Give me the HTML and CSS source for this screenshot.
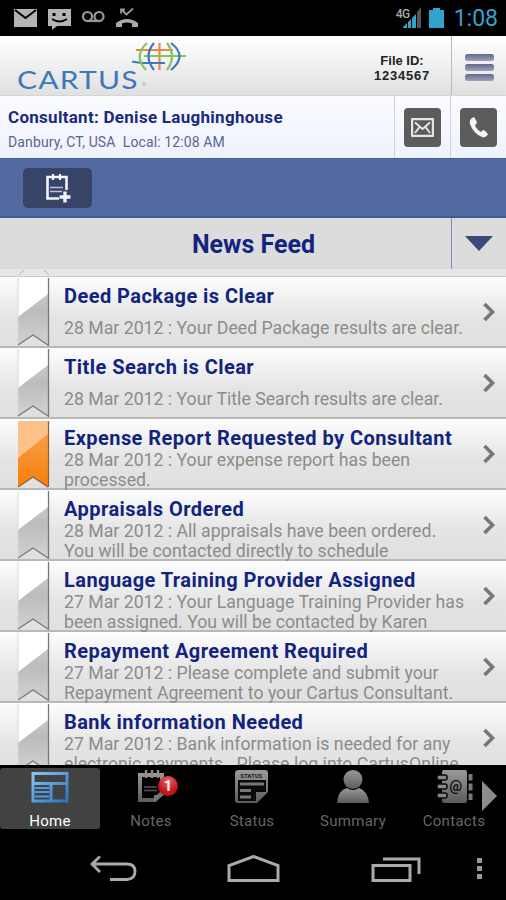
FILE: index.html
```html
<!DOCTYPE html>
<html lang="en">
<head>
    <meta charset="UTF-8">
    <meta name="viewport" content="width=device-width, initial-scale=1.0">
    <title>Cartus Mobile</title>
    <link rel="stylesheet" href="styles.css">
</head>
<body>
    <!-- shared shapes -->
    <svg class="defs" width="0" height="0">
        <defs>
            <linearGradient id="silver" x1="0" y1="0" x2="0" y2="1">
                <stop offset="0" stop-color="#d2d2d2"/>
                <stop offset="0.5" stop-color="#bcbcbc"/>
                <stop offset="1" stop-color="#d2d2d2"/>
            </linearGradient>
            <linearGradient id="orange" x1="0" y1="0" x2="0" y2="1">
                <stop offset="0" stop-color="#f9a552"/>
                <stop offset="1" stop-color="#f77f0c"/>
            </linearGradient>
            <linearGradient id="grey" x1="0" y1="0" x2="0" y2="1">
                <stop offset="0" stop-color="#999"/>
                <stop offset="1" stop-color="#5c5c5c"/>
            </linearGradient>
            <linearGradient id="blue" x1="0" y1="0" x2="1" y2="1">
                <stop offset="0" stop-color="#86c4f4"/>
                <stop offset="1" stop-color="#2a74c4"/>
            </linearGradient>
            <linearGradient id="bars" x1="0" y1="0" x2="0" y2="1">
                <stop offset="0" stop-color="#626b85"/>
                <stop offset="1" stop-color="#99a2bf"/>
            </linearGradient>
        </defs>
        <symbol id="ribbon" viewBox="0 0 33 70">
            <path d="M1 1H31V68L16 58L1 68Z" fill="url(#silver)"/>
            <path d="M1 1H31V17L1 40Z" fill="#fff"/>
            <path d="M1 1V67" stroke="#d8d8d8" fill="none"/>
            <path d="M31.5 1V69M1 68L16 58L31 68" stroke="#777" stroke-width="1.3" fill="none"/>
        </symbol>
        <symbol id="ribbon-on" viewBox="0 0 33 70">
            <path d="M1 2H31V68L16 58L1 68Z" fill="url(#orange)"/>
            <path d="M1 2H31V15L1 39Z" fill="#fcc089"/>
            <path d="M31.5 2V68M1 68L16 58L31 68" stroke="#876040" stroke-width="1.2" fill="none"/>
        </symbol>
        <symbol id="chevron" viewBox="0 0 14 20">
            <path d="M2.500 2L10.500 10L2.500 18" fill="none" stroke="#777" stroke-width="3.600"/>
        </symbol>
    </svg>

    <div class="statusbar">
        <svg width="130" height="22" viewBox="0 0 130 22">
            <path d="M0 2H23V20H0Z" fill="#b4b4b4"/>
            <path d="M1 3L11.500 11L22 3" fill="none" stroke="#000" stroke-width="2"/>
            <path d="M34 2H57V19H43L38 23V19H34Z" fill="#b4b4b4"/>
            <path d="M40 6V9M50 6V9" stroke="#000" stroke-width="3"/>
            <path d="M38 12Q45.500 17 53 12" fill="none" stroke="#000" stroke-width="1.800"/>
            <g fill="none" stroke="#999" stroke-width="2.200">
                <circle cx="73.500" cy="9.500" r="4.500"/>
                <circle cx="85" cy="9.500" r="4.500"/>
                <path d="M73 14H86"/>
            </g>
            <path d="M102 20V16Q113 8 124 16V20H118V16.500Q113 14.500 108 16.500V20Z" fill="#aaa"/>
            <path d="M108 3L112.500 7.500L119 1.500M107 6.500V2.500H111" fill="none" stroke="#999" stroke-width="1.800"/>
        </svg>
        <div class="status-right">
            <span class="net">4G</span>
            <svg width="42" height="22" viewBox="0 0 42 22">
                <path d="M1 21V20L5 16V21Z M6 21V15L9 12V21Z M10 21V11L14 7V21Z" fill="#33a3ce"/>
                <path d="M15 21V5L19 0V21Z" fill="#555"/>
                <path d="M27 3H31V1H38V3H42V21H27Z" fill="#33a3ce"/>
            </svg>
            <span class="clock">1:08</span>
        </div>
    </div>

    <div class="header">
        <div class="logo">
            <span class="brand">CARTUS</span><i class="dot"></i>
            <svg class="globe" width="58" height="32" viewBox="0 0 58 32">
                <g fill="none" stroke-width="2.200">
                    <path d="M5 9H42M28.500 2V29" stroke="#ee8746"/>
                    <path d="M13 15H55" stroke="#83c657"/>
                    <path d="M1 20.500L10 22H34" stroke="#3f79bd"/>
                    <path d="M16 2Q2 15 15 29M36 2Q46 15 36 29" stroke="#83c657"/>
                    <path d="M23 2Q12 15 23 29M40 2Q57 15 40 29" stroke="#3f79bd"/>
                </g>
            </svg>
        </div>
        <div class="file-id"><span>File ID:</span><span class="number">1234567</span></div>
        <div class="menu">
            <svg width="29" height="27" viewBox="0 0 29 27">
                <rect x="0" y="0" width="29" height="7" rx="2.500" fill="url(#bars)"/>
                <rect x="0" y="10" width="29" height="7" rx="2.500" fill="url(#bars)"/>
                <rect x="0" y="20" width="29" height="7" rx="2.500" fill="url(#bars)"/>
            </svg>
        </div>
    </div>

    <div class="consultant">
        <div class="who">
            <div class="name">Consultant: Denise Laughinghouse</div>
            <div class="place">Danbury, CT, USA&nbsp; Local: 12:08 AM</div>
        </div>
        <div class="contact">
            <div class="square">
                <svg width="23" height="19" viewBox="0 0 23 19">
                    <rect x="1" y="1" width="21" height="17" rx="1" fill="none" stroke="#e6e6e6" stroke-width="2.400"/>
                    <path d="M4 4.500L11.500 11L19 4.500M4 15L8.500 9M19 15L14.500 9" fill="none" stroke="#e6e6e6" stroke-width="2"/>
                </svg>
            </div>
        </div>
        <div class="contact">
            <div class="square">
                <svg width="20" height="21" viewBox="0 0 20 21">
                    <path d="M3 1Q0 3 1 7Q4 16 13 20Q17 21 19 17L15 13Q13 13 12 15Q7 12 6 8Q8 7 8 5L5 0Z" fill="#f4f4f4"/>
                </svg>
            </div>
        </div>
    </div>

    <div class="toolbar">
        <div class="add-note">
            <svg width="26" height="30" viewBox="0 0 26 30">
                <g fill="none" stroke="#f2f4f8" stroke-width="2.600">
                    <path d="M14 25.500H2.500V4H21.500V17"/>
                    <path d="M8 1V7M15 1V7" stroke-width="2.200"/>
                    <path d="M5 14.500H18M5 18.500H17" stroke-width="1.600" stroke="#bdc4d3"/>
                    <path d="M20 18.500V29.500M14.500 24H25.500" stroke-width="3.400"/>
                </g>
            </svg>
        </div>
    </div>

    <div class="feed-head">
        <h1>News Feed</h1>
        <div class="arrow">
            <svg width="28" height="15" viewBox="0 0 28 15"><path d="M0 0H28L14 15Z" fill="#3b4978"/></svg>
        </div>
    </div>

    <div class="list">
        <div class="peek">
            <svg width="33" height="8" viewBox="0 0 33 8"><path d="M1 6L6 1M31 6L26 1" stroke="#b5b5b5" fill="none"/></svg>
        </div>
        <div class="row">
            <svg class="ribbon" width="33" height="70"><use href="#ribbon"/></svg>
            <div class="text single">
                <h2>Deed Package is Clear</h2>
                <p>28 Mar 2012 : Your Deed Package results are clear.</p>
            </div>
            <svg class="chevron" width="14" height="20"><use href="#chevron"/></svg>
        </div>
        <div class="row">
            <svg class="ribbon" width="33" height="70"><use href="#ribbon"/></svg>
            <div class="text single">
                <h2>Title Search is Clear</h2>
                <p>28 Mar 2012 : Your Title Search results are clear.</p>
            </div>
            <svg class="chevron" width="14" height="20"><use href="#chevron"/></svg>
        </div>
        <div class="row">
            <svg class="ribbon" width="33" height="70"><use href="#ribbon-on"/></svg>
            <div class="text">
                <h2>Expense Report Requested by Consultant</h2>
                <p>28 Mar 2012 : Your expense report has been<br>processed.</p>
            </div>
            <svg class="chevron" width="14" height="20"><use href="#chevron"/></svg>
        </div>
        <div class="row">
            <svg class="ribbon" width="33" height="70"><use href="#ribbon"/></svg>
            <div class="text">
                <h2>Appraisals Ordered</h2>
                <p>28 Mar 2012 : All appraisals have been ordered.<br>You will be contacted directly to schedule</p>
            </div>
            <svg class="chevron" width="14" height="20"><use href="#chevron"/></svg>
        </div>
        <div class="row">
            <svg class="ribbon" width="33" height="70"><use href="#ribbon"/></svg>
            <div class="text">
                <h2>Language Training Provider Assigned</h2>
                <p>27 Mar 2012 : Your Language Training Provider has<br>been assigned. You will be contacted by Karen</p>
            </div>
            <svg class="chevron" width="14" height="20"><use href="#chevron"/></svg>
        </div>
        <div class="row">
            <svg class="ribbon" width="33" height="70"><use href="#ribbon"/></svg>
            <div class="text">
                <h2>Repayment Agreement Required</h2>
                <p>27 Mar 2012 : Please complete and submit your<br>Repayment Agreement to your Cartus Consultant.</p>
            </div>
            <svg class="chevron" width="14" height="20"><use href="#chevron"/></svg>
        </div>
        <div class="row">
            <svg class="ribbon" width="33" height="70"><use href="#ribbon"/></svg>
            <div class="text">
                <h2>Bank information Needed</h2>
                <p>27 Mar 2012 : Bank information is needed for any<br>electronic payments.&nbsp; Please log into CartusOnline</p>
            </div>
            <svg class="chevron" width="14" height="20"><use href="#chevron"/></svg>
        </div>
    </div>

    <div class="tabs">
        <div class="tab active">
            <svg width="38" height="34" viewBox="0 0 38 34">
                <path d="M2 3.500H36V31H2ZM2 13.500H36M20 13.500V31" fill="none" stroke="url(#blue)" stroke-width="3"/>
                <path d="M4 18H18M4 22H18M4 26.500H18" stroke="#4d9be0" stroke-width="2"/>
            </svg>
            <span>Home</span>
        </div>
        <div class="tab">
            <svg width="38" height="34" viewBox="0 0 38 34">
                <path d="M6 3H32V24L24 32H6ZM10 7V28H21L28 22V7Z" fill="url(#grey)" fill-rule="evenodd"/>
                <path d="M14 0V8M20 0V8M26 0V8" stroke="#8c8c8c" stroke-width="2.400"/>
                <path d="M12 17H25M12 20.500H25" stroke="#555" stroke-width="1.500"/>
                <path d="M22 32V25H32Z" fill="#777"/>
            </svg>
            <b class="badge">1</b>
            <span>Notes</span>
        </div>
        <div class="tab">
            <svg width="38" height="34" viewBox="0 0 38 34">
                <path d="M6 0H32Q35 0 35 3V22L24 33H5Q2 33 2 30V3Q2 0 6 0Z" fill="url(#grey)"/>
                <path d="M5 10H33V22H23V31H5Z" fill="#0a0a0a"/>
                <path d="M7 14H31M7 20.500H18M7 27H18" fill="none" stroke="#777" stroke-width="3"/>
                <text x="18.500" y="7.500" text-anchor="middle" class="tiny">STATUS</text>
            </svg>
            <span>Status</span>
        </div>
        <div class="tab">
            <svg width="38" height="34" viewBox="0 0 38 34">
                <circle cx="19" cy="9.500" r="9.500" fill="url(#grey)"/>
                <path d="M3 33Q4 20 13 18Q19 22 25 18Q34 21 35 33Z" fill="url(#grey)"/>
            </svg>
            <span>Summary</span>
        </div>
        <div class="tab">
            <svg width="38" height="34" viewBox="0 0 38 34">
                <path d="M9 0H30Q32 0 32 3V30Q32 33 30 33H9Q7 33 7 30V3Q7 0 9 0Z" fill="url(#grey)"/>
                <path d="M35.500 4V10.500M35.500 13.500V20.500M35.500 23.500V30" stroke="#777" stroke-width="4"/>
                <g fill="#888" stroke="#0a0a0a" stroke-width="1.500">
                    <rect x="2" y="5" width="10" height="5" rx="2"/>
                    <rect x="2" y="14" width="10" height="5" rx="2"/>
                    <rect x="2" y="23" width="10" height="5" rx="2"/>
                </g>
                <text x="21" y="21" text-anchor="middle" class="at">@</text>
            </svg>
            <span>Contacts</span>
        </div>
        <svg class="more" width="15" height="30" viewBox="0 0 15 30"><path d="M0 0L15 15L0 30Z" fill="#8c8c8c"/></svg>
    </div>

    <div class="navbar">
        <svg width="48" height="28" viewBox="0 0 48 28">
            <path d="M21 24.500H38Q46 24 46 16.500Q46 9 38 9H4M11 1.500L3 9L11 17" fill="none" stroke="#aaa" stroke-width="2.800"/>
        </svg>
        <svg class="home" width="53" height="28" viewBox="0 0 53 28">
            <path d="M2 25.500V10.500L26.500 1.500L51 10.500V25.500Z" fill="none" stroke="#aaa" stroke-width="3"/>
        </svg>
        <svg class="recent" width="50" height="28" viewBox="0 0 50 28">
            <path d="M2 10.500H39V25.500H2ZM12 4H48V19" fill="none" stroke="#aaa" stroke-width="3"/>
        </svg>
        <svg class="dots" width="6" height="21" viewBox="0 0 6 21">
            <path d="M0 0H5V5H0ZM0 8H5V13H0ZM0 16H5V21H0Z" fill="#999"/>
        </svg>
    </div>
</body>
</html>
```
FILE: styles.css
```css
body {
    margin: 0;
    width: 506px;
    height: 900px;
    overflow: hidden;
    display: flex;
    flex-direction: column;
    background: #000;
    font-family: Roboto, "Liberation Sans", sans-serif;
}

svg {
    display: block;
    flex: none;
}

.defs {
    position: absolute;
}

/* android status bar */
.statusbar {
    height: 36px;
    flex: none;
    display: flex;
    align-items: center;
    justify-content: space-between;
    padding: 0 8px 0 14px;
    box-sizing: border-box;
    background: #000;
}

.statusbar svg {
    overflow: visible;
}

.status-right {
    display: flex;
    align-items: center;
}

.net {
    font-size: 12px;
    font-weight: 500;
    color: #aaa;
    margin: -9px -8px 0 0;
    letter-spacing: -0.5px;
}

.clock {
    font-size: 23px;
    color: #33a3ce;
    margin-left: 10px;
}

/* header */
.header {
    height: 60px;
    flex: none;
    display: flex;
    box-sizing: border-box;
    border-bottom: 1px solid #d6d6d6;
    background: linear-gradient(#fff, #e0e0e0);
}

.logo {
    position: relative;
    flex: 1;
    display: flex;
    align-items: flex-end;
    padding: 0 0 2px 17px;
}

.brand {
    width: 123px;
    font-family: Lato, sans-serif;
    font-size: 25px;
    line-height: 28px;
    letter-spacing: 1px;
    color: #3c78bd;
    transform: scaleX(1.2);
    transform-origin: left;
}

.dot {
    width: 4px;
    height: 4px;
    border-radius: 50%;
    background: #b5cce8;
    margin: 0 0 7px 2px;
}

.globe {
    position: absolute;
    left: 131px;
    top: 5px;
}

.file-id {
    width: 98px;
    display: flex;
    flex-direction: column;
    align-items: center;
    justify-content: center;
    padding-top: 4px;
    font: bold 13px/15px "Liberation Sans", sans-serif;
    color: #222;
}

.number {
    letter-spacing: 0.8px;
}

.menu {
    width: 54px;
    display: flex;
    align-items: center;
    justify-content: center;
    padding-top: 4px;
    border-left: 1px solid #bbb;
}

/* consultant */
.consultant {
    height: 62px;
    flex: none;
    display: flex;
    background: linear-gradient(#fbfcff, #eef2fd);
}

.who {
    flex: 1;
    padding: 10px 0 0 8px;
}

.name {
    font-size: 17px;
    line-height: 22px;
    font-weight: 700;
    letter-spacing: 0.28px;
    color: #1b2a7c;
    white-space: nowrap;
}

.place {
    font-size: 14px;
    line-height: 20px;
    margin-top: 4px;
    letter-spacing: 0.12px;
    color: #5c658f;
    white-space: nowrap;
}

.contact {
    width: 55px;
    display: flex;
    justify-content: center;
    border-left: 1px solid #d0d3dd;
}

.square {
    width: 37px;
    height: 39px;
    margin-top: 12px;
    border-radius: 4px;
    background: #5c5c5c;
    display: flex;
    align-items: center;
    justify-content: center;
}

.toolbar {
    height: 60px;
    flex: none;
    box-sizing: border-box;
    padding: 9px 0 0 23px;
    border-top: 1px solid #465a94;
    border-bottom: 2px solid #415898;
    background: #5369a1;
}

.add-note {
    width: 69px;
    height: 40px;
    border-radius: 5px;
    background: #374467;
    display: flex;
    align-items: center;
    justify-content: center;
}

/* feed */
.feed-head {
    height: 51px;
    flex: none;
    display: flex;
    background: #dcdcdc;
}

.feed-head h1 {
    flex: 1;
    margin: 0;
    padding-left: 56px;
    text-align: center;
    font-size: 25px;
    line-height: 54px;
    font-weight: 700;
    color: #12247e;
}

.arrow {
    width: 54px;
    display: flex;
    align-items: center;
    justify-content: center;
    border-left: 1px solid #7f8fba;
}

.list {
    height: 496px;
    flex: none;
    overflow: hidden;
}

.peek {
    height: 8px;
    box-sizing: border-box;
    padding-left: 18px;
    background: #e6e6e6;
    border-bottom: 1px solid #ccc;
}

.row {
    height: 71px;
    box-sizing: border-box;
    display: flex;
    align-items: center;
    padding: 0 10px 0 17px;
    border-bottom: 2px solid #b8b8b8;
    background: linear-gradient(#fdfdfd, #e4e4e4 60%, #e0e0e0);
}

.text {
    flex: 1;
    height: 69px;
    padding-left: 14px;
    white-space: nowrap;
}

.text h2 {
    margin: 7px 0 0;
    font-size: 20px;
    line-height: 24px;
    font-weight: 700;
    letter-spacing: 0.44px;
    color: #12247e;
}

.text p {
    margin: 0;
    font-size: 17.7px;
    line-height: 20px;
    color: #8c8c8c;
}

.single p {
    margin-top: 10px;
}

/* bottom tabs */
.tabs {
    position: relative;
    height: 66px;
    flex: none;
    display: flex;
    gap: 1px;
    background: #000;
}

.tab {
    position: relative;
    width: 100px;
    height: 61px;
    margin-top: 3px;
    padding-top: 2px;
    box-sizing: border-box;
    display: flex;
    flex-direction: column;
    align-items: center;
    font-size: 15px;
    line-height: 20px;
    letter-spacing: 0.3px;
    color: #666;
}

.tab span {
    margin-top: 7px;
}

.active {
    border-radius: 3px;
    background: #424242;
    color: #fff;
}

.badge {
    position: absolute;
    left: 57px;
    top: 8px;
    width: 20px;
    height: 20px;
    border-radius: 50%;
    background: radial-gradient(circle at 50% 25%, #e8666a, #c3141c 60%);
    color: #fff;
    font-size: 14px;
    text-align: center;
    letter-spacing: 0;
}

.tiny {
    font: bold 5.5px Roboto, sans-serif;
    fill: #111;
}

.at {
    font: bold 14px Roboto, sans-serif;
    fill: #111;
}

.more {
    position: absolute;
    left: 482px;
    top: 16px;
}

/* android buttons */
.navbar {
    height: 69px;
    flex: none;
    display: flex;
    align-items: center;
    padding: 6px 0 0 89px;
    box-sizing: border-box;
}

.home {
    margin-left: 90px;
}

.recent {
    margin-left: 91px;
}

.dots {
    margin-left: 56px;
}
```
